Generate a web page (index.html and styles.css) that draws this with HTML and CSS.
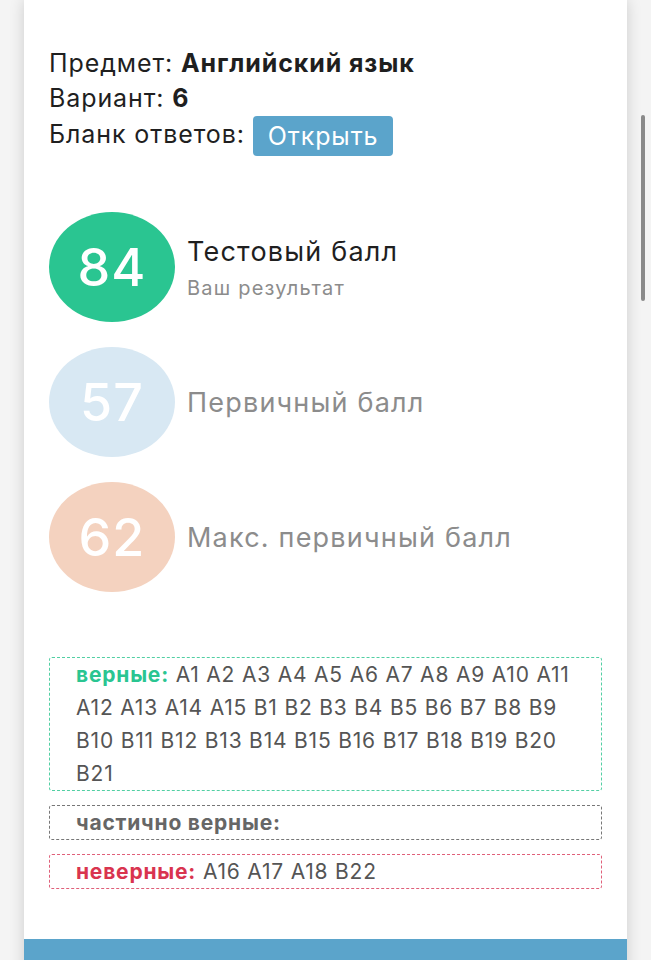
FILE: index.html
```html
<!DOCTYPE html>
<html lang="ru">
<head>
    <meta charset="UTF-8">
    <meta name="viewport" content="width=device-width, initial-scale=1.0">
    <title>Результаты экзамена</title>
    <link rel="stylesheet" href="styles.css">
</head>
<body>
    <div class="page">
        <div class="card">
            <div class="info">
                <div>Предмет: <b>Английский язык</b></div>
                <div>Вариант: <b>6</b></div>
                <div>Бланк ответов: <a href="#" class="btn">Открыть</a></div>
            </div>

            <div class="scores">
                <div class="score">
                    <div class="circle green">84</div>
                    <div class="score-text">
                        <div class="score-title">Тестовый балл</div>
                        <div class="score-sub">Ваш результат</div>
                    </div>
                </div>
                <div class="score muted">
                    <div class="circle blue">57</div>
                    <div class="score-text">
                        <div class="score-title">Первичный балл</div>
                    </div>
                </div>
                <div class="score muted">
                    <div class="circle peach">62</div>
                    <div class="score-text">
                        <div class="score-title">Макс. первичный балл</div>
                    </div>
                </div>
            </div>

            <div class="answers">
                <div class="answer-box right">
                    <b>верные:</b> A1 A2 A3 A4 A5 A6 A7 A8 A9 A10 A11 A12 A13 A14 A15 B1 B2 B3 B4 B5 B6 B7 B8 B9 B10 B11 B12 B13 B14 B15 B16 B17 B18 B19 B20 B21
                </div>
                <div class="answer-box partial">
                    <b>частично верные:</b>
                </div>
                <div class="answer-box wrong">
                    <b>неверные:</b> A16 A17 A18 B22
                </div>
            </div>
        </div>
        <div class="card-footer"></div>
    </div>
    <div class="scrollbar"></div>
</body>
</html>
```

FILE: styles.css
```css
:root {
    --green: #2ac591;
    --blue: #5ba4cb;
    --red: #d9344f;
    --text: #1f1f1f;
    --text-muted: #8c8c8c;
    --text-answers: #555;
}

body {
    margin: 0;
    background: #f4f4f4;
    font-family: 'Inter', 'Roboto', sans-serif;
    color: var(--text);
    overflow: hidden;
}

.page {
    margin: 0 24px;
    box-shadow: 0 0 14px rgba(0,0,0,0.16);
}

.card {
    background: #fff;
    padding: 46px 25px 50px 25px;
}

.info {
    font-size: 25px;
    line-height: 35px;
    letter-spacing: 0.9px;
}

.info b {
    font-weight: 700;
}

.btn {
    display: inline-block;
    background: var(--blue);
    color: #fff;
    text-decoration: none;
    padding: 0 15px;
    line-height: 40px;
    border-radius: 4px;
    vertical-align: middle;
}

.scores {
    margin-top: 56px;
    display: flex;
    flex-direction: column;
    gap: 25px;
}

.score {
    display: flex;
    align-items: center;
    gap: 12px;
}

.circle {
    width: 126px;
    height: 110px;
    border-radius: 50%;
    color: #fff;
    font-size: 52px;
    font-weight: 500;
    letter-spacing: 1px;
    display: flex;
    align-items: center;
    justify-content: center;
}

.circle.green { background: var(--green); }
.circle.blue { background: #d8e8f3; }
.circle.peach { background: #f4d2bf; }

.score-title {
    font-size: 27px;
    letter-spacing: 1.2px;
}

.score-sub {
    font-size: 20px;
    letter-spacing: 1.2px;
    color: var(--text-muted);
    margin-top: 8px;
}

.score.muted .score-title {
    color: var(--text-muted);
}

.answers {
    margin-top: 65px;
    display: flex;
    flex-direction: column;
    gap: 14px;
}

.answer-box {
    border: 1.5px dashed;
    border-radius: 3px;
    padding: 0 24px 0 26px;
    font-size: 21px;
    line-height: 33px;
    letter-spacing: 0.8px;
    color: var(--text-answers);
}

.answer-box.right { border-color: #52cfa3; }
.answer-box.right b { color: var(--green); }
.answer-box.partial { border-color: #777; }
.answer-box.partial b { color: #666; }
.answer-box.wrong { border-color: #e0607a; }
.answer-box.wrong b { color: var(--red); }

.card-footer {
    height: 40px;
    background: var(--blue);
}

.scrollbar {
    position: fixed;
    right: 6px;
    top: 115px;
    width: 4px;
    height: 186px;
    border-radius: 2px;
    background: #8a8a8a;
}
```
